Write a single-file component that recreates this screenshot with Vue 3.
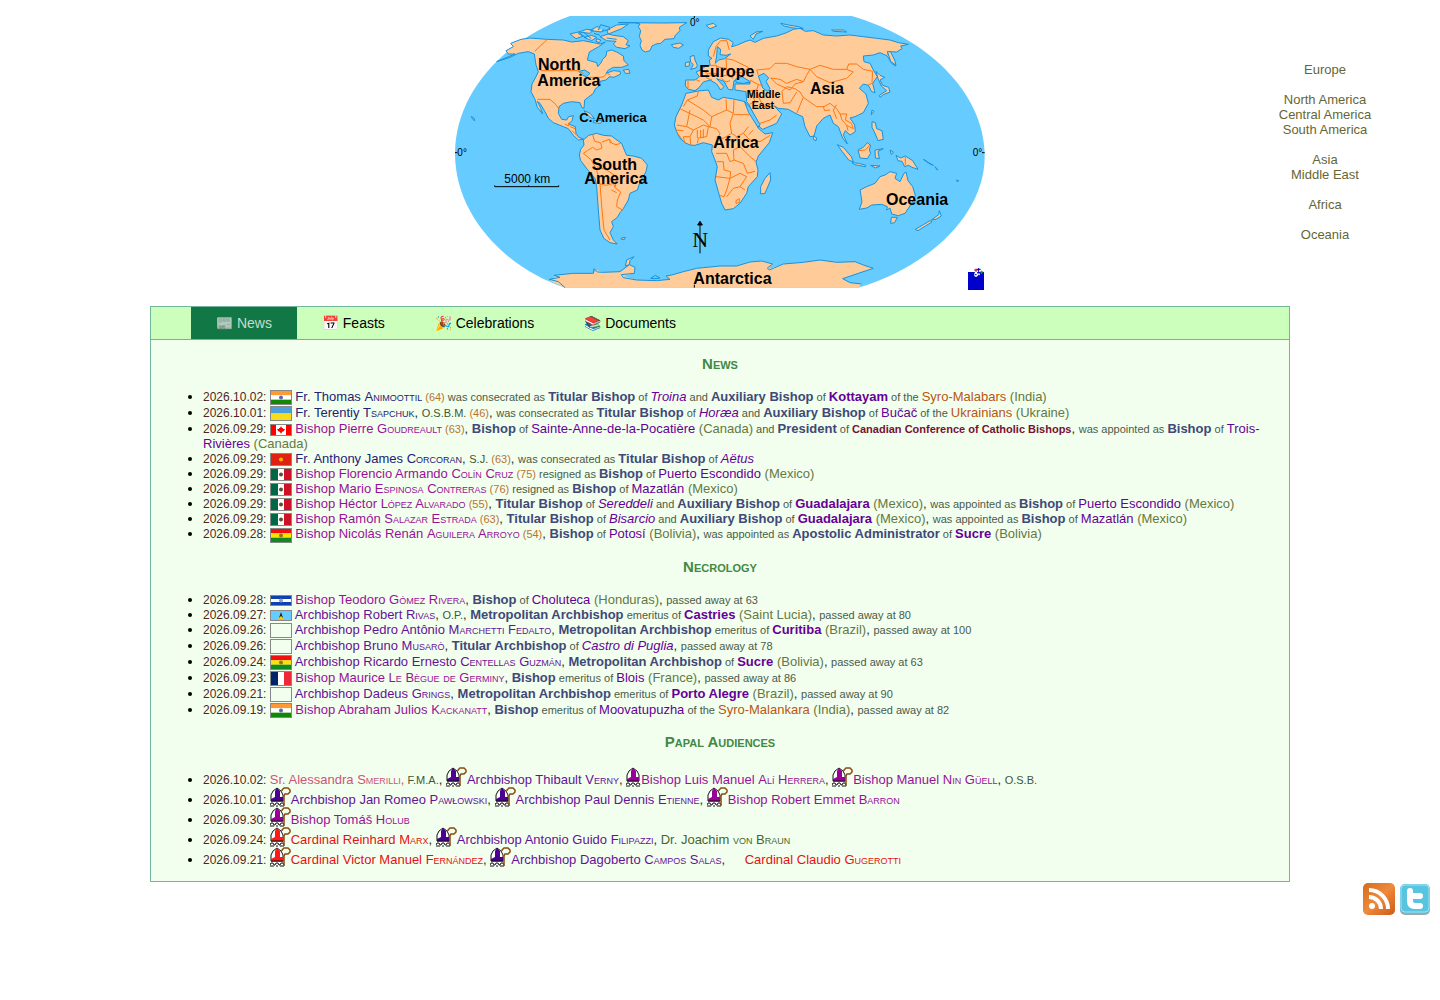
<script setup>
import { ref } from 'vue'

const tabs = [
  { icon: '📰', label: 'News' },
  { icon: '📅', label: 'Feasts' },
  { icon: '🎉', label: 'Celebrations' },
  { icon: '📚', label: 'Documents' },
]
const activeTab = ref('News')

const regions = [
  ['Europe'],
  ['North America', 'Central America', 'South America'],
  ['Asia', 'Middle East'],
  ['Africa'],
  ['Oceania'],
]

const mapLabels = [
  ['North', 264, 180, 48],
  ['America', 262, 228, 48],
  ['C. America', 388, 337, 39],
  ['South', 425, 481, 48],
  ['America', 403, 522, 48],
  ['Europe', 748, 200, 48],
  ['Asia', 1080, 251, 48],
  ['Middle', 890, 264, 32],
  ['East', 905, 297, 32],
  ['Africa', 790, 413, 48],
  ['Oceania', 1308, 585, 48],
  ['Antarctica', 730, 823, 48],
]

const flags = {
  india: { h: 13, rows: ['#ff9933', '#ffffff', '#128807'], dot: '#5566bb' },
  ukraine: { h: 13, rows: ['#4a9fdc', '#f8dc1c'] },
  canada: { h: 10, cols: [['#ff0000', 5], ['#ffffff', 10], ['#ff0000', 5]], leaf: true },
  kyrgyzstan: { h: 11, rows: ['#e02010'], dot: '#f5b800' },
  mexico: { h: 11, cols: [['#006847', 7], ['#ffffff', 6], ['#ce1126', 7]], dot: '#5c5030' },
  bolivia: { h: 13, rows: ['#f01010', '#f9e300', '#108a20'], dot: '#a07010' },
  honduras: { h: 9, rows: ['#1040b0', '#ffffff', '#1040b0'], dot: '#7f9fd8' },
  lucia: { h: 9, rows: ['#66ccff'], peak: true },
  france: { h: 13, cols: [['#002468', 7], ['#ffffff', 6], ['#ed2939', 7]] },
  blank: { h: 13, rows: [] },
}

const links = ['fr', 'bp', 'abp', 'cdl', 'sr', 'dr', 'see', 'metro', 'titular', 'rite', 'conf']
const t = (s) => ['txt', s]
const role = (s) => ['role', s]
const age = (n) => ['age', `(${n})`]
const land = (s) => ['land', ` (${s})`]
const c = ['punct', ', ']
const sp = ['txt', ' ']

const news = [
  { date: '2026.10.02', flag: 'india', parts: [['fr', 'Fr. Thomas ', 'Animoottil'], sp, age(64), t(' was consecrated as '), role('Titular Bishop'), t(' of '), ['titular', 'Troina'], t(' and '), role('Auxiliary Bishop'), t(' of '), ['metro', 'Kottayam'], t(' of the '), ['rite', 'Syro-Malabars'], land('India')] },
  { date: '2026.10.01', flag: 'ukraine', parts: [['fr', 'Fr. Terentiy ', 'Tsapchuk'], c, ['order', 'O.S.B.M.'], sp, age(46), c, t('was consecrated as '), role('Titular Bishop'), t(' of '), ['titular', 'Horæa'], t(' and '), role('Auxiliary Bishop'), t(' of '), ['see', 'Bučač'], t(' of the '), ['rite', 'Ukrainians'], land('Ukraine')] },
  { date: '2026.09.29', flag: 'canada', parts: [['bp', 'Bishop Pierre ', 'Goudreault'], sp, age(63), c, role('Bishop'), t(' of '), ['see', 'Sainte-Anne-de-la-Pocatière'], land('Canada'), t(' and '), role('President'), t(' of '), ['conf', 'Canadian Conference of Catholic Bishops'], c, t('was appointed as '), role('Bishop'), t(' of '), ['see', 'Trois-Rivières'], land('Canada')] },
  { date: '2026.09.29', flag: 'kyrgyzstan', parts: [['fr', 'Fr. Anthony James ', 'Corcoran'], c, ['order', 'S.J.'], sp, age(63), c, t('was consecrated as '), role('Titular Bishop'), t(' of '), ['titular', 'Aëtus']] },
  { date: '2026.09.29', flag: 'mexico', parts: [['bp', 'Bishop Florencio Armando ', 'Colín Cruz'], sp, age(75), t(' resigned as '), role('Bishop'), t(' of '), ['see', 'Puerto Escondido'], land('Mexico')] },
  { date: '2026.09.29', flag: 'mexico', parts: [['bp', 'Bishop Mario ', 'Espinosa Contreras'], sp, age(76), t(' resigned as '), role('Bishop'), t(' of '), ['see', 'Mazatlán'], land('Mexico')] },
  { date: '2026.09.29', flag: 'mexico', parts: [['bp', 'Bishop Héctor ', 'López Alvarado'], sp, age(55), c, role('Titular Bishop'), t(' of '), ['titular', 'Sereddeli'], t(' and '), role('Auxiliary Bishop'), t(' of '), ['metro', 'Guadalajara'], land('Mexico'), c, t('was appointed as '), role('Bishop'), t(' of '), ['see', 'Puerto Escondido'], land('Mexico')] },
  { date: '2026.09.29', flag: 'mexico', parts: [['bp', 'Bishop Ramón ', 'Salazar Estrada'], sp, age(63), c, role('Titular Bishop'), t(' of '), ['titular', 'Bisarcio'], t(' and '), role('Auxiliary Bishop'), t(' of '), ['metro', 'Guadalajara'], land('Mexico'), c, t('was appointed as '), role('Bishop'), t(' of '), ['see', 'Mazatlán'], land('Mexico')] },
  { date: '2026.09.28', flag: 'bolivia', parts: [['bp', 'Bishop Nicolás Renán ', 'Aguilera Arroyo'], sp, age(54), c, role('Bishop'), t(' of '), ['see', 'Potosí'], land('Bolivia'), c, t('was appointed as '), role('Apostolic Administrator'), t(' of '), ['metro', 'Sucre'], land('Bolivia')] },
]

const necrology = [
  { date: '2026.09.28', flag: 'honduras', parts: [['bp', 'Bishop Teodoro ', 'Gómez Rivera'], c, role('Bishop'), t(' of '), ['see', 'Choluteca'], land('Honduras'), c, t('passed away at 63')] },
  { date: '2026.09.27', flag: 'lucia', parts: [['abp', 'Archbishop Robert ', 'Rivas'], c, ['order', 'O.P.'], c, role('Metropolitan Archbishop'), t(' emeritus of '), ['metro', 'Castries'], land('Saint Lucia'), c, t('passed away at 80')] },
  { date: '2026.09.26', flag: 'blank', parts: [['abp', 'Archbishop Pedro Antônio ', 'Marchetti Fedalto'], c, role('Metropolitan Archbishop'), t(' emeritus of '), ['metro', 'Curitiba'], land('Brazil'), c, t('passed away at 100')] },
  { date: '2026.09.26', flag: 'blank', parts: [['abp', 'Archbishop Bruno ', 'Musarò'], c, role('Titular Archbishop'), t(' of '), ['titular', 'Castro di Puglia'], c, t('passed away at 78')] },
  { date: '2026.09.24', flag: 'bolivia', parts: [['abp', 'Archbishop Ricardo Ernesto ', 'Centellas Guzmán'], c, role('Metropolitan Archbishop'), t(' of '), ['metro', 'Sucre'], land('Bolivia'), c, t('passed away at 63')] },
  { date: '2026.09.23', flag: 'france', parts: [['bp', 'Bishop Maurice ', 'Le Bègue de Germiny'], c, role('Bishop'), t(' emeritus of '), ['see', 'Blois'], land('France'), c, t('passed away at 86')] },
  { date: '2026.09.21', flag: 'blank', parts: [['abp', 'Archbishop Dadeus ', 'Grings'], c, role('Metropolitan Archbishop'), t(' emeritus of '), ['metro', 'Porto Alegre'], land('Brazil'), c, t('passed away at 90')] },
  { date: '2026.09.19', flag: 'india', parts: [['bp', 'Bishop Abraham Julios ', 'Kackanatt'], c, role('Bishop'), t(' emeritus of '), ['see', 'Moovatupuzha'], t(' of the '), ['rite', 'Syro-Malankara'], land('India'), c, t('passed away at 82')] },
]

const violet = ['mitre', '#4b0091']
const purple = ['mitre', '#990099']
const scarlet = ['mitre', '#ff1a1a']

const audiences = [
  { date: '2026.10.02', parts: [['sr', 'Sr. Alessandra ', 'Smerilli,'], sp, ['order', 'F.M.A.'], c, violet, ['abp', 'Archbishop Thibault ', 'Verny'], c, ['auxmitre', '#990099'], ['bp', 'Bishop Luis Manuel ', 'Alí Herrera'], c, purple, ['bp', 'Bishop Manuel ', 'Nin Güell'], c, ['order', 'O.S.B.']] },
  { date: '2026.10.01', parts: [violet, ['abp', 'Archbishop Jan Romeo ', 'Pawłowski'], c, violet, ['abp', 'Archbishop Paul Dennis ', 'Etienne'], c, purple, ['bp', 'Bishop Robert Emmet ', 'Barron']] },
  { date: '2026.09.30', parts: [purple, ['bp', 'Bishop Tomáš ', 'Holub']] },
  { date: '2026.09.24', parts: [scarlet, ['cdl', 'Cardinal Reinhard ', 'Marx'], c, violet, ['abp', 'Archbishop Antonio Guido ', 'Filipazzi'], c, ['dr', 'Dr. Joachim ', 'von Braun']] },
  { date: '2026.09.21', parts: [scarlet, ['cdl', 'Cardinal Victor Manuel ', 'Fernández'], c, violet, ['abp', 'Archbishop Dagoberto ', 'Campos Salas'], c, ['gap', ''], ['cdl', 'Cardinal Claudio ', 'Gugerotti']] },
]

const sections = [
  { title: 'News', items: news },
  { title: 'Necrology', items: necrology },
  { title: 'Papal Audiences', items: audiences },
]
</script>

<template>
  <div class="page">
    <header class="top">
      <svg class="map" viewBox="15 18 1590 822" role="img" aria-label="World map">
        <path fill="#66ccff" d="M360 18C160 90 15 250 15 430C15 620 170 775 345 833H1225C1440 770 1604 610 1604 440C1604 240 1420 80 1205 18Z" />
        <g class="coast">
          <path d="M168 122L190 110 182 100 213 88 240 84 290 88 340 90 365 96 400 92 430 98 450 102 466 96 446 110 418 126 412 150 440 158 443 170 452 160 458 148 468 138 470 124 485 120 500 126 520 138 522 152 535 165 515 172 490 172 475 180 468 190 490 182 510 184 512 192 492 202 478 200 468 210 450 214 450 225 435 238 430 250 404 270 402 295 395 292 390 278 365 275 340 280 327 290 325 310 335 328 350 330 356 320 370 317 366 332 356 342 376 350 378 370 386 382 402 388 385 390 370 376 355 356 340 350 310 338 295 325 285 305 270 280 262 274 272 295 278 312 262 292 255 268 243 245 246 222 258 200 265 185 258 165 253 132 235 125 205 130 180 142 140 155 195 132 175 132Z" />
          <path d="M505 38H555L570 42 565 50 572 62 568 80 574 92 570 106 576 120 586 126 600 122 606 108 618 102 632 100 645 88 672 86 676 76 690 62 688 52 710 38 640 39Z" />
          <path d="M664 104L690 99 700 105 686 115 670 112ZM360 72L385 66 400 78 378 86ZM386 66L410 58 430 60 420 70ZM402 82L425 76 440 82 425 92ZM420 62L440 50 462 54 455 66ZM450 80L475 72 490 76 520 80 535 92 528 104 540 108 525 116 500 112 490 102 498 94 470 92ZM470 60L500 45 535 42 515 56 490 66 475 72ZM440 86L452 90 448 98 438 94Z" />
          <path d="M720 140L732 136 735 150 742 166 738 174 722 178 730 164 722 156ZM706 158L718 155 718 168 706 170ZM520 180L536 178 540 190 526 190Z" />
          <path d="M402 302L420 310 434 326 424 324 408 312ZM430 332L456 332 452 340 430 338ZM64 320L72 324 74 332 68 328Z" />
          <path d="M388 435L392 418 402 405 400 390 416 376 440 370 460 376 485 378 495 386 515 400 525 425 530 436 550 438 575 445 592 465 588 485 570 516 562 540 540 550 535 570 520 596 510 608 502 622 485 635 490 650 480 668 490 690 502 702 480 698 462 686 450 660 445 600 440 530 435 505 412 478 392 452Z" />
          <path d="M514 684L526 682 524 688 514 688ZM530 750L552 740 540 752 538 764 526 768Z" />
          <path d="M708 250L745 243 775 240 785 262 805 270 820 262 855 268 885 275 895 300 915 330 925 355 945 372 968 368 958 398 925 438 918 456 924 480 922 500 895 530 890 550 870 580 850 596 825 600 815 580 805 545 795 510 802 470 793 445 785 425 787 405 760 398 735 406 720 405 705 398 690 385 680 365 673 345 678 320 695 285Z" />
          <path d="M960 488L962 510 945 550 932 552 932 530 945 505Z" />
          <path d="M707 210H735L748 200 738 186 752 180 765 170 780 165 778 150 786 145 775 138 775 120 790 95 812 84 836 88 850 98 845 110 860 106 885 95 900 90 915 97 940 85 980 78 1010 68 1030 58 1050 55 1066 64 1090 62 1120 75 1160 78 1200 75 1240 80 1280 85 1320 90 1345 98 1375 103 1352 108 1356 116 1340 126 1320 125 1312 132 1330 146 1337 168 1325 160 1312 138 1290 128 1270 135 1240 138 1242 155 1260 160 1270 180 1282 200 1268 220 1275 248 1265 245 1255 226 1240 222 1228 235 1248 252 1255 280 1240 308 1215 320 1200 324 1214 345 1216 365 1200 375 1186 362 1180 374 1192 402 1178 384 1165 350 1150 340 1140 315 1120 325 1100 348 1092 378 1080 380 1065 350 1058 320 1040 312 1015 298 985 295 973 288 995 312 980 340 938 358 930 352 916 326 898 285 890 275 888 245 855 240 855 222H900L896 212 876 204 868 214 852 212 848 240 835 238 822 214 800 206 822 230 812 240 800 222 780 210 760 216 748 232 735 242 715 238 706 228Z" />
          <path d="M900 78L918 66 938 64 918 72 910 88ZM992 40L1020 46 1046 50 1060 56 1030 54 1002 48ZM1145 60L1180 60 1190 66 1150 64ZM768 46L790 40 800 48 780 56ZM1312 124L1322 126 1334 150 1338 166 1322 154Z" />
          <path d="M1278 184L1290 196 1304 202 1290 210 1298 226 1316 232 1320 246 1300 254 1290 262 1288 256 1310 242 1294 228 1284 206ZM1266 300L1272 304 1264 314ZM1090 378L1100 384 1098 392 1090 388ZM1266 335L1276 338 1280 356 1296 362 1300 388 1284 392 1276 372 1266 352Z" />
          <path d="M1162 404L1180 412 1204 440 1210 456 1196 450 1176 424ZM1206 458L1226 460 1248 466 1246 470 1214 464ZM1224 420L1240 412 1252 398 1262 406 1258 420 1262 430 1252 446 1230 444ZM1275 420L1300 416 1284 424 1288 446 1276 444ZM1262 466L1290 468 1276 474ZM1320 420L1330 426 1324 434ZM1338 436L1352 444 1366 438 1388 452 1404 478 1386 472 1376 466 1364 470 1356 454 1344 452ZM1420 448L1436 458 1450 466 1440 462ZM1455 470L1464 480 1458 476Z" />
          <path d="M1230 540L1250 530 1275 520 1290 500 1305 495 1320 485 1340 490 1335 505 1350 515 1362 490 1368 486 1374 512 1388 530 1396 556 1385 580 1365 610 1345 617 1325 612 1320 594 1310 600 1312 590 1295 583 1265 585 1250 594 1228 598 1236 575Z" />
          <path d="M1324 622L1342 622 1334 638 1322 640ZM1396 658L1420 644 1440 632 1446 636 1426 648 1404 662ZM1444 630L1466 614 1468 602 1474 618 1458 628ZM1520 510L1526 512 1522 516Z" />
          <path stroke="none" d="M345 833L300 812 320 795 370 790 430 790 440 780 460 787 510 785 540 764 555 772 553 790 520 798 560 810 620 812 660 808 648 798 665 795 700 785 740 775 810 768 860 768 900 756 935 753 968 762 954 778 1000 762 1060 757 1110 750 1160 757 1215 755 1240 765 1270 775 1225 790 1178 806 1200 818 1235 822 1225 833Z" />
          <path fill="none" d="M345 833L325 815 298 808 330 802 312 796 370 790 430 790 432 776 442 786 460 787 510 785 538 764 555 772 553 790 514 794 520 803 560 810 620 812 660 808 648 798 665 795 700 785 740 775 810 768 860 768 900 756 935 753 968 762 952 774 958 780 1000 762 1060 757 1110 750 1160 757 1215 755 1240 765 1270 775 1225 790 1178 806 1200 818 1235 822M602 805L616 796 630 804 614 806Z" />
        </g>
        <g class="water">
          <path d="M925 198L942 190 956 204 948 214 960 236 952 244 938 234ZM856 208L876 200 902 216 880 220 860 218ZM802 110L812 118 810 134 828 136 842 132 824 146 806 150 796 160 800 138ZM386 184L404 180 420 190 410 200 398 196ZM884 276L900 292 930 344 924 352 896 308Z" />
          <path d="M384 70L410 84M432 70L450 76M455 64L480 58M470 84L500 88M445 60L452 44 480 52M400 66L424 86" />
        </g>
        <g class="borders">
          <path d="M292 88L254 124M272 182H385L400 190M420 202H450L462 200 470 190 480 194M262 268H300L318 284 326 296M344 342L356 348 356 338M360 350L376 356M366 362L380 376" />
          <path d="M428 374L434 394 452 398 456 414 440 420 428 412 412 422 400 430M456 396L478 388 486 400 498 404 512 400M478 388L482 400M400 430L424 450 440 480 450 522 456 600 462 660 480 690M450 522L470 526 490 520 496 534 512 546 502 570 500 590 518 600M440 470L470 480 500 500 496 530M484 540L500 548" />
          <path d="M745 243L742 258 712 270 700 290M712 270L760 300 785 320 830 300 828 268M785 320L780 350 760 330 690 296M680 345L710 350 720 300M710 350L730 360 720 380 700 380 704 398M730 360L760 345 775 350 770 380 745 384 742 400M720 380L722 404M775 350L800 356 810 370 798 400 790 410M830 300L850 310 852 268M852 314H900M850 310L840 340 845 370 820 385 800 380M895 350L880 370 900 390 930 395 960 376M880 370L860 380 845 370M860 380L870 410 900 440 920 456M870 410L850 420 852 450 880 460 892 490 915 484M798 430L830 430 840 455 852 450M798 500L840 505 842 485 822 480 820 455 800 455M840 505L830 540 822 560 808 556M840 505L870 490 890 500 870 530 850 535 830 560M870 530L885 540M858 572L868 566 868 578 858 580ZM896 374L910 360M684 372L696 388M676 360L700 362M742 360L742 384M752 360V384M760 358V384" />
          <path d="M714 212V236M736 208L750 214M756 180L772 190 770 204 786 210M780 166L800 166 800 190 780 196M800 170L830 175 832 195 810 200M830 175L828 146 850 150 870 160 895 172 880 190 850 185M790 140L798 110 812 92 830 92 838 120M832 195L850 205M814 205L828 216 840 212M775 190L800 190M900 210L925 224 920 240 890 244M925 224L940 226M920 240L926 262 940 290 975 288M905 250L915 275 900 282M930 340L960 330 980 315" />
          <path d="M925 196L920 180 960 176 975 160 1010 160 1040 170 1080 178 1070 196 1060 215 1040 208 1010 220 990 208 962 204M962 204L980 222 1020 240 1035 222 1060 215M1080 178L1110 166 1150 178 1190 178 1210 186 1190 205 1140 218 1100 200 1080 178M1190 178L1196 162 1220 162 1240 178 1268 184 1266 216M996 244L1010 230 1035 236 1050 246 1060 262 1100 290 1122 290 1140 280 1160 296 1170 312M996 244L1000 280 1020 278 1040 246M1040 310L1060 262M1120 290L1124 302 1140 300M1160 284L1150 300 1160 326M1170 312L1190 312 1186 330 1204 340 1210 356 1190 346 1176 330ZM1190 346L1194 362M1254 226L1268 218M1366 440V466M1226 422L1246 420 1260 404" />
        </g>
        <g class="ink">
          <path d="M733 18V24M733 824V833M134 526V530H326V526M236 530V526M15 428H22M1596 428H1604" />
          <path d="M750 636V730M743 645L750 634 757 645Z" />
        </g>
        <g class="legend">
          <text x="720" y="47" font-size="30">0°</text>
          <text x="22" y="437" font-size="30">0°</text>
          <text x="1568" y="437" font-size="30">0°</text>
          <text x="163" y="520" font-size="36">5000 km</text>
          <text class="north" x="727" y="710" font-size="66">N</text>
        </g>
        <g class="names">
          <text v-for="([name, x, y, size], i) in mapLabels" :key="i" :x="x" :y="y" :font-size="size">{{ name }}</text>
        </g>
        <path fill="#0000cc" d="M1554 786H1602V840H1554Z" />
        <path fill="none" stroke="#fff" stroke-width="7" d="M1572 794H1590M1578 786V800" />
        <path fill="none" stroke="#d00040" stroke-width="3" d="M1572 780H1584M1578 776V786" />
        <path fill="none" stroke="#0000a0" stroke-width="3" d="M1580 778H1592M1586 774V786M1574 794H1580M1584 796H1590" />
        <path fill="none" stroke="#00a040" stroke-width="3" d="M1590 786H1600M1595 782V792" />
      </svg>
      <nav class="regions" aria-label="Regions">
        <div v-for="group in regions" :key="group[0]" class="region-group">
          <a v-for="name in group" :key="name" href="#">{{ name }}</a>
        </div>
      </nav>
    </header>

    <main class="panel">
      <nav class="tabs">
        <button v-for="tab in tabs" :key="tab.label" type="button" class="tab" :class="{ active: tab.label === activeTab }" @click="activeTab = tab.label">{{ tab.icon }} {{ tab.label }}</button>
      </nav>
      <section v-for="section in sections" :key="section.title" class="section">
        <h2>{{ section.title }}</h2>
        <ul>
          <li v-for="(item, i) in section.items" :key="i">
            <span class="date">{{ item.date }}: </span>
            <template v-if="item.flag">
              <svg class="flag" width="20" :height="flags[item.flag].h" :viewBox="`0 0 20 ${flags[item.flag].h}`" aria-hidden="true">
                <rect v-for="(fill, r) in flags[item.flag].rows || []" :key="'r' + r" width="20" :y="(r * flags[item.flag].h) / flags[item.flag].rows.length" :height="flags[item.flag].h / flags[item.flag].rows.length" :fill="fill" />
                <rect v-for="([fill, w], k) in flags[item.flag].cols || []" :key="'c' + k" :x="k === 0 ? 0 : k === 1 ? flags[item.flag].cols[0][1] : 20 - w" :width="w" :height="flags[item.flag].h" :fill="fill" />
                <circle v-if="flags[item.flag].dot" cx="10" :cy="flags[item.flag].h / 2" r="2" :fill="flags[item.flag].dot" />
                <path v-if="flags[item.flag].leaf" fill="#f00" d="M10 1L11 3 12 3 12 4 14 4 13 6 11 7 10 9 9 7 7 6 6 4 8 4 8 3 9 3Z" />
                <template v-if="flags[item.flag].peak">
                  <path fill="#222" d="M10 1L12 7H8Z" />
                  <path fill="#f5d000" d="M10 5L13 8H7Z" />
                </template>
              </svg>{{ ' ' }}
            </template>
            <template v-for="(part, j) in item.parts" :key="j">
              <svg v-if="part[0] === 'mitre' || part[0] === 'auxmitre'" :class="part[0]" :viewBox="part[0] === 'mitre' ? '0 0 21 20' : '0 0 15 20'" aria-hidden="true">
                <path fill="#fff" stroke="#111" d="M1 14V8L3 4 7 1 11 4 13 8V14Z" />
                <path :fill="part[1]" d="M7 1L10 4V10H13V14H1V12L5 10V4Z" />
                <path fill="#fff" d="M1 15H14V19H1Z" />
                <path fill="none" stroke="#111" d="M1 14H13M0 18L1 16H3L4 18H5L6 16H8L9 18H10L11 16H13L14 18M0 19H4M6 19H8M10 19H14" />
                <path v-if="part[0] === 'mitre'" fill="none" stroke="#8b4a10" stroke-width="1.5" d="M14 19V9L15 7H18L20 5V3L18 1H14L12 3V4" />
              </svg>
              <span v-else-if="part[0] === 'gap'" class="gap"></span>
              <a v-else-if="links.includes(part[0])" href="#" :class="part[0]">{{ part[1] }}<span v-if="part[2]" class="surname">{{ part[2] }}</span></a>
              <span v-else :class="part[0]">{{ part[1] }}</span>
            </template>
          </li>
        </ul>
      </section>
    </main>

    <footer class="social">
      <a href="#" aria-label="RSS feed">
        <svg width="32" height="32" viewBox="0 0 32 32">
          <defs>
            <linearGradient id="rss" x1="0" y1="0" x2="1" y2="1">
              <stop offset="0" stop-color="#d56a1c" />
              <stop offset=".5" stop-color="#ee8a3c" />
              <stop offset="1" stop-color="#cf5a14" />
            </linearGradient>
          </defs>
          <rect width="32" height="32" rx="5" fill="url(#rss)" />
          <circle cx="9" cy="23" r="3" fill="#fff" />
          <path fill="none" stroke="#fff" stroke-width="4" d="M6 14A12 12 0 0 1 18 26M6 7A19 19 0 0 1 25 26" />
        </svg>
      </a>
      <a href="#" aria-label="Twitter">
        <svg width="32" height="32" viewBox="0 0 32 32">
          <rect x="1" y="3" width="30" height="29" rx="5" fill="#9aa9b0" />
          <rect x="1" y="1" width="30" height="29" rx="5" fill="#58c4e0" />
          <rect x="2" y="2" width="28" height="27" rx="4" fill="none" stroke="#a4e2f0" />
          <path fill="none" stroke="#fff" stroke-width="6" stroke-linecap="round" stroke-linejoin="round" d="M11 8V18Q11 23 16 23H21M11 13H21" />
        </svg>
      </a>
    </footer>
  </div>
</template>

<style>
body {
  margin: 0;
  background: #fff;
}
</style>

<style scoped>
.page {
  padding-top: 16px;
  font: 13px/15px "Liberation Sans", Arial, sans-serif;
  color: #000;
}
a {
  text-decoration: none;
}
.top {
  display: grid;
  grid-template-columns: 230px 1fr 230px;
  align-items: center;
  margin-bottom: 16px;
}
.map {
  grid-column: 2;
  justify-self: center;
  width: 530px;
  max-width: 100%;
  height: auto;
}
.coast {
  fill: #ffcc99;
  stroke: #1492e0;
  stroke-width: 3;
}
.water {
  fill: #66ccff;
  stroke: #1492e0;
  stroke-width: 3;
}
.borders {
  fill: none;
  stroke: #ff7711;
  stroke-width: 3;
}
.ink {
  fill: #000;
  stroke: #000;
  stroke-width: 3;
}
.ink path:first-child {
  fill: none;
}
.names {
  font-weight: bold;
}
.north {
  font-family: "Liberation Serif", serif;
}
.regions {
  display: flex;
  flex-direction: column;
  gap: 15px;
  padding-bottom: 2px;
  text-align: center;
}
.region-group {
  display: flex;
  flex-direction: column;
}
.regions a {
  color: #666633;
}
.panel {
  margin: 0 150px;
  padding-bottom: 14px;
  border: 1px solid #73b59a;
  background: #f2ffee;
}
.tabs {
  display: flex;
  padding-left: 40px;
  background: #ccffbb;
  border-bottom: 1px solid #73b59a;
}
.tab {
  height: 32px;
  padding: 0 25px;
  border: 0;
  background: none;
  color: #000;
  font: 14px/32px "Liberation Sans", Arial, sans-serif;
  cursor: pointer;
}
.tab.active {
  background: #117744;
  color: rgb(255 255 255 / 75%);
}
.section h2 {
  margin: 15px 0 17px;
  font-size: 15px;
  line-height: 17px;
  font-variant: small-caps;
  text-align: center;
  color: #448844;
}
.section ul {
  margin: 0;
  padding: 0 13px 0 52px;
}
.date,
.txt,
.age,
.order,
.conf {
  font-size: 11px;
  line-height: 12px;
}
.date {
  font-size: 12px;
  color: #552222;
}
.txt {
  color: #4a5a4a;
}
.age {
  color: #b87333;
}
.order {
  color: #445533;
}
.punct {
  color: #223322;
}
.role {
  font-weight: bold;
  color: #404878;
}
.land {
  color: #667744;
}
.surname {
  font-variant: small-caps;
}
.fr {
  color: #222277;
}
.bp {
  color: #991199;
}
.abp {
  color: #661199;
}
.cdl {
  color: #e81010;
}
.sr {
  color: #cc5577;
}
.dr {
  color: #446633;
}
.see,
.metro,
.titular {
  color: #660099;
}
.metro,
.conf {
  font-weight: bold;
}
.titular {
  font-style: italic;
}
.rite {
  color: #bb5511;
}
.conf {
  color: #771133;
}
.flag {
  border: 1px solid #888;
  vertical-align: middle;
}
.mitre,
.auxmitre {
  width: 21px;
  height: 20px;
  vertical-align: text-bottom;
}
.auxmitre {
  width: 15px;
}
.gap {
  display: inline-block;
  width: 16px;
}
.social {
  display: flex;
  justify-content: flex-end;
  gap: 4px;
  padding: 1px 9px 0 0;
}
.social svg {
  display: block;
}
</style>
